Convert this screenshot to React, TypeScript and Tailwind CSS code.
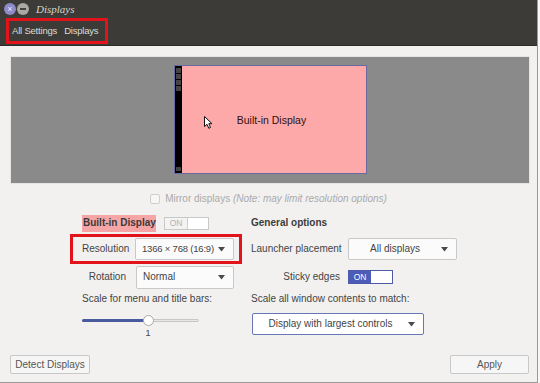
import React from "react";

function Arrow() {
  return (
    <svg width="7" height="5" viewBox="0 0 7 5" className="shrink-0">
      <path d="M0 0 L7 0 L3.5 4.5 Z" fill="#4a4a4a" />
    </svg>
  );
}

function Dropdown({
  text,
  className,
  center,
  small,
}: {
  text: string;
  className: string;
  center?: boolean;
  small?: boolean;
}) {
  return (
    <div
      className={`flex items-center rounded-[2px] border bg-[#fbfbfb] pr-[8px] ${className}`}
    >
      <span
        className={`flex-1 whitespace-nowrap leading-[12px] text-[#444] ${small ? "text-[9.5px] tracking-[-0.2px]" : "text-[10px]"} ${center ? "text-center" : "pl-[6px]"}`}
      >
        {text}
      </span>
      <Arrow />
    </div>
  );
}

export default function App() {
  return (
    <div className="flex h-[383px] w-[540px] overflow-hidden bg-[#f7f7f7] font-['Liberation_Sans',sans-serif]">
      <div className="flex h-[383px] w-[538px] flex-col border-b border-r border-[#9a9a9a] bg-[#f2f1f0]">
        {/* Header */}
        <div className="flex h-[46px] shrink-0 flex-col border-b border-[#2c2b28] bg-[#3c3b37]">
          <div className="flex h-[18px] items-center pl-[4px]">
            <div className="flex h-[12px] w-[12px] items-center justify-center rounded-full bg-[#8e8ac8] text-[9px] leading-[9px] text-[#e8e6ff]">
              ×
            </div>
            <div className="ml-[1px] flex h-[12px] w-[12px] items-center justify-center rounded-full bg-[#a9a9a7]">
              <div className="h-[2px] w-[6px] bg-[#444]" />
            </div>
            <span className="ml-[7px] font-['Liberation_Serif',serif] text-[11px] italic leading-[12px] text-[#d8d5cc]">
              Displays
            </span>
          </div>
          <div className="ml-[6px] flex h-[26px] w-[102px] items-center gap-[7px] whitespace-nowrap border-[3px] border-[#e2131b] pl-[3px] tracking-[-0.2px]">
            <span className="text-[9.5px] leading-[12px] text-[#dfdbd2]">All Settings</span>
            <span className="text-[9.5px] leading-[12px] text-[#dfdbd2]">Displays</span>
          </div>
        </div>

        {/* Display arrangement */}
        <div className="ml-[10px] mt-[10px] flex h-[128px] w-[520px] shrink-0 justify-center border border-[#e4e4e4] bg-[#8a8a8a] pt-[8px]">
          <div className="relative flex h-[109px] w-[193px] border border-[#6a6aa0] bg-[#fea9a9]">
            <div className="flex h-full w-[7px] flex-col items-center bg-black pt-[2px]">
              <div className="mb-[1px] h-[5px] w-[5px] bg-[#444]" />
              <div className="mb-[1px] h-[5px] w-[5px] bg-[#444]" />
              <div className="mb-[1px] h-[5px] w-[5px] bg-[#444]" />
              <div className="h-[5px] w-[5px] bg-[#444]" />
              <div className="mb-[2px] mt-auto h-[4px] w-[5px] bg-[#444]" />
            </div>
            <div className="flex flex-1 items-center justify-center pr-[4px] text-[10.5px] leading-[12px] text-[#2e1010]">
              Built-in Display
            </div>
            <svg
              width="9"
              height="13"
              viewBox="0 0 9 13"
              className="absolute left-[29px] top-[50px]"
            >
              <path
                d="M0.5 0.5 L0.5 10.5 L3 8.3 L4.8 12.3 L6.5 11.5 L4.8 7.7 L8 7.7 Z"
                fill="#fff"
                stroke="#111"
                strokeWidth="1"
              />
            </svg>
          </div>
        </div>

        {/* Mirror */}
        <div className="mt-[7px] flex h-[16px] items-center justify-center gap-[5px]">
          <div className="h-[10px] w-[10px] rounded-[2px] border border-[#cfcfcf] bg-[#f6f6f6]" />
          <span className="whitespace-nowrap text-[10px] leading-[12px] text-[#aaaaaa]">
            Mirror displays <span className="italic">(Note: may limit resolution options)</span>
          </span>
        </div>

        {/* Options grid */}
        <div className="ml-[70px] grid grid-cols-[181px_auto] grid-rows-[27px_30px_26px_17px_auto]">
          {/* row 1 */}
          <div className="flex items-center pl-[12px] pt-[5px]">
            <div className="flex h-[17px] w-[74px] items-center whitespace-nowrap bg-[#f5a5a5] pl-[1px] text-[10px] font-bold leading-[12px] text-[#3a3a3a]">
              Built-in Display
            </div>
            <div className="ml-[8px] flex h-[13px] w-[45px] border border-[#c9c9c9] bg-[#f3f3f3]">
              <div className="flex w-[22px] items-center justify-center text-[8.5px] leading-[10px] text-[#b2b2b2]">
                ON
              </div>
              <div className="flex-1 border-l border-[#cfcfcf] bg-white" />
            </div>
          </div>
          <div className="flex items-center pt-[5px] text-[10px] font-bold leading-[12px] text-[#3c3c3c]">
            General options
          </div>

          {/* row 2 */}
          <div className="flex h-[30px] w-[172px] items-center border-[3px] border-[#e2131b] pl-[9px]">
            <span className="w-[53px] text-[10px] leading-[12px] text-[#444]">Resolution</span>
            <Dropdown text="1366 × 768 (16:9)" small className="h-[22px] w-[99px] border-[#c8c8c8]" />
          </div>
          <div className="flex items-center">
            <span className="w-[97px] whitespace-nowrap text-[10px] leading-[12px] text-[#444]">Launcher placement</span>
            <Dropdown text="All displays" center className="h-[22px] w-[109px] border-[#c8c8c8]" />
          </div>

          {/* row 3 */}
          <div className="flex items-center pl-[12px]">
            <span className="w-[44px] text-right text-[10px] leading-[12px] text-[#444]">Rotation</span>
            <Dropdown text="Normal" className="ml-[10px] h-[23px] w-[98px] border-[#c8c8c8]" />
          </div>
          <div className="flex items-center">
            <span className="w-[89px] text-right text-[10px] leading-[12px] text-[#444]">Sticky edges</span>
            <div className="ml-[8px] flex h-[14px] w-[45px] border border-[#4c5aa8] bg-white">
              <div className="flex w-[22px] items-center justify-center bg-[#4d5cb9] text-[8.5px] leading-[10px] text-white">
                ON
              </div>
              <div className="flex-1 bg-white" />
            </div>
          </div>

          {/* row 4 */}
          <div className="flex items-center whitespace-nowrap pl-[12px] text-[10px] leading-[12px] text-[#444]">
            Scale for menu and title bars:
          </div>
          <div className="flex items-center whitespace-nowrap text-[10px] leading-[12px] text-[#444]">
            Scale all window contents to match:
          </div>

          {/* row 5 */}
          <div className="flex flex-col pl-[12px] pt-[8px]">
            <div className="relative h-[11px] w-[117px]">
              <div className="absolute left-0 top-[4px] h-[3px] w-[117px] rounded-full border border-[#c6c6c6] bg-[#e6e6e6]" />
              <div className="absolute left-0 top-[4px] h-[3px] w-[66px] rounded-full bg-[#4a5a9e]" />
              <div className="absolute left-[61px] top-0 h-[11px] w-[11px] rounded-full border border-[#a8a8a8] bg-white" />
            </div>
            <div className="mt-[1px] w-[132px] text-center text-[9px] leading-[12px] text-[#444]">1</div>
          </div>
          <div className="flex items-start pt-[6px]">
            <Dropdown
              text="Display with largest controls"
              center
              className="ml-[1px] h-[22px] w-[172px] border-[1.5px] border-[#6577b4] bg-white"
            />
          </div>
        </div>

        {/* Bottom buttons */}
        <div className="mt-auto flex justify-between px-[10px] pb-[8px]">
          <div className="flex h-[19px] w-[80px] items-center justify-center rounded-[2px] border border-[#c8c8c8] bg-[#f6f6f6] text-[10px] leading-[12px] text-[#555]">
            Detect Displays
          </div>
          <div className="mr-[-2px] flex h-[19px] w-[79px] items-center justify-center rounded-[2px] border border-[#c8c8c8] bg-[#f6f6f6] text-[10px] leading-[12px] text-[#555]">
            Apply
          </div>
        </div>
      </div>
    </div>
  );
}
